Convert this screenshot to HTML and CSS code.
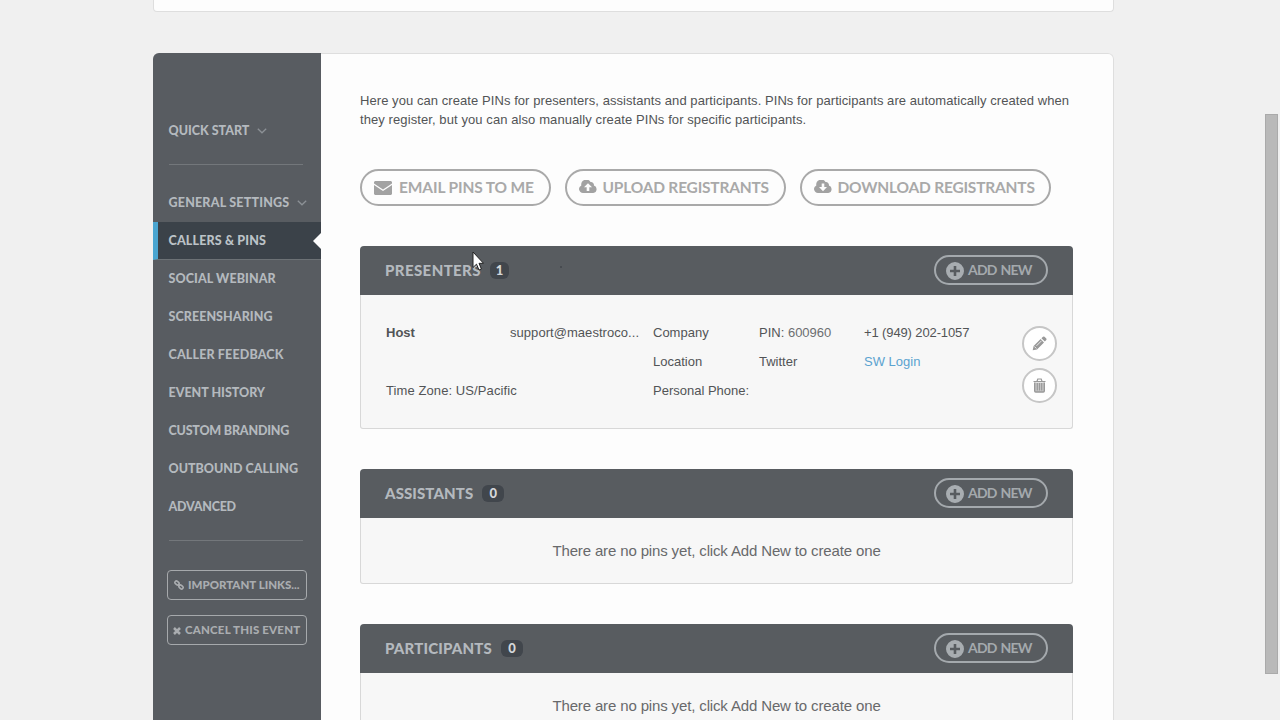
FILE: index.html
```html
<!DOCTYPE html>
<html lang="en">
<head>
<meta charset="utf-8">
<title>Callers &amp; PINs</title>
<link rel="stylesheet" href="styles.css">
</head>
<body>
<svg width="0" height="0" class="defs">
  <symbol id="plus" viewBox="0 0 18 18"><path fill-rule="evenodd" d="M9 0a9 9 0 1 1 0 18A9 9 0 0 1 9 0zM7.700 4v3.700H4v2.600h3.700V14h2.600v-3.700H14V7.700h-3.700V4z"/></symbol>
  <symbol id="chev" viewBox="0 0 10 6"><path d="M.8.8L5 4.800 9.200.8" fill="none" stroke="currentColor" stroke-width="1.300"/></symbol>
</svg>
<div class="page">
  <div class="card-prev"></div>
  <div class="card">
    <nav class="side">
      <a class="item quick"><span class="t1">QUICK START</span><svg class="chev"><use href="#chev"/></svg></a>
      <hr class="rule">
      <div class="menu">
        <a class="item"><span class="t2">GENERAL SETTINGS</span><svg class="chev"><use href="#chev"/></svg></a>
        <a class="item active"><span class="t3">CALLERS &amp; PINS</span></a>
        <a class="item"><span class="t4">SOCIAL WEBINAR</span></a>
        <a class="item"><span class="t5">SCREENSHARING</span></a>
        <a class="item"><span class="t6">CALLER FEEDBACK</span></a>
        <a class="item"><span class="t7">EVENT HISTORY</span></a>
        <a class="item"><span class="t8">CUSTOM BRANDING</span></a>
        <a class="item"><span class="t9">OUTBOUND CALLING</span></a>
        <a class="item"><span class="t10">ADVANCED</span></a>
      </div>
      <hr class="rule">
      <a class="sbtn"><svg class="s-link" viewBox="0 0 10 10"><g fill="none" stroke="currentColor" stroke-width="1.600"><rect x="-2.300" y="-1.500" width="4.600" height="3" rx="1.500" transform="translate(3 3) rotate(42)"/><rect x="-2.300" y="-1.500" width="4.600" height="3" rx="1.500" transform="translate(7 7) rotate(42)"/><path d="M4 4l2 2"/></g></svg><span class="b1">IMPORTANT LINKS...</span></a>
      <a class="sbtn"><svg class="s-x" viewBox="0 0 8 8"><path d="M1 1l6 6M7 1L1 7" stroke="currentColor" stroke-width="2.500"/></svg><span class="b2">CANCEL THIS EVENT</span></a>
    </nav>
    <main class="main">
      <p class="intro"><span class="l1">Here you can create PINs for presenters, assistants and participants. PINs for participants are automatically created when</span><br><span class="l2">they register, but you can also manually create PINs for specific participants.</span></p>
      <div class="actions">
        <a class="pill p1"><svg class="mail" viewBox="0 0 18 14"><path d="M1 0h16l1 1v1.500L9 8.500 0 2.500V1zM0 4l9 6 9-6v9l-1 1H1l-1-1z"/></svg><span class="a1">EMAIL PINS TO ME</span></a>
        <a class="pill p2"><svg class="cloud" viewBox="0 0 18 13"><path fill-rule="evenodd" d="M4 13a4 4 0 0 1-1.700-7.600A5 5 0 0 1 11.500 2a3 3 0 0 1 3.400 3.600A3.800 3.800 0 0 1 14.300 13zM9 3.200L5 7.300h2.700V11h2.600V7.300H13z"/></svg><span class="a2">UPLOAD REGISTRANTS</span></a>
        <a class="pill p3"><svg class="cloud" viewBox="0 0 18 13"><path fill-rule="evenodd" d="M4 13a4 4 0 0 1-1.700-7.600A5 5 0 0 1 11.500 2a3 3 0 0 1 3.400 3.600A3.800 3.800 0 0 1 14.300 13zM7.700 3.500V7H5l4 4.200L13 7h-2.700V3.500z"/></svg><span class="a3">DOWNLOAD REGISTRANTS</span></a>
      </div>
      <section class="panel">
        <header class="head"><h2 class="h1">PRESENTERS</h2><span class="badge">1</span><a class="add"><svg class="plus"><use href="#plus"/></svg><span>ADD NEW</span></a></header>
        <div class="body host">
          <div class="grid">
            <b class="name">Host</b><span class="mail-addr">support@maestroco...</span><span>Company</span><span class="pin">PIN: <i>600960</i></span><span class="tel">+1 (949) 202-1057</span>
            <span class="loc">Location</span><span>Twitter</span><a class="link">SW Login</a>
            <span class="tz">Time Zone: US/Pacific</span><span class="phone">Personal Phone:</span>
          </div>
          <div class="tools">
            <a class="round"><svg width="15" height="15" viewBox="0 0 15 15"><path d="M.7 14.300l.9-4.300L8.600 3 12 6.400l-7 7zM9.400 2.200L11 .7q.8-.6 1.500 0l1.800 1.800q.6.800 0 1.500l-1.500 1.600z"/><path d="M2.400 10.500l2 2M4.500 9.800l5-5" stroke="#fff" stroke-width=".8"/></svg></a>
            <a class="round"><svg width="13" height="15" viewBox="0 0 13 15"><path d="M1.700 4.500V13q0 1 1 1h7.600q1 0 1-1V4.500" fill="#c8c8c8" stroke="#999" stroke-width="1.400"/><path d="M.5 3.500h12M4 3.300L4.800 1h3.400L9 3.300M4.300 5v7.500M6.500 5v7.500M8.700 5v7.500" fill="none" stroke="#999" stroke-width="1.200"/></svg></a>
          </div>
        </div>
      </section>
      <section class="panel">
        <header class="head"><h2 class="h2">ASSISTANTS</h2><span class="badge wide">0</span><a class="add"><svg class="plus"><use href="#plus"/></svg><span>ADD NEW</span></a></header>
        <div class="body empty">There are no pins yet, click Add New to create one</div>
      </section>
      <section class="panel">
        <header class="head"><h2 class="h3">PARTICIPANTS</h2><span class="badge wide">0</span><a class="add"><svg class="plus"><use href="#plus"/></svg><span>ADD NEW</span></a></header>
        <div class="body empty">There are no pins yet, click Add New to create one</div>
      </section>
    </main>
  </div>
</div>
<div class="thumb"></div>
<svg class="speck" viewBox="0 0 2 2"><circle cx="1" cy="1" r=".8" fill="#34383c"/></svg>
<svg class="cursor" viewBox="0 0 12 20"><path d="M1 1v15.500l3.500-3.300L7 19l2.400-1L7 12.300h4.500z" fill="#fff" stroke="#222" stroke-width="1"/></svg>
</body>
</html>
```
FILE: styles.css
```css
* { box-sizing: border-box; }
body { margin: 0; height: 720px; overflow: hidden; background: #f0f0f0; font: 13px/19px "Liberation Sans", Arial, sans-serif; color: #525456; }
.defs { position: absolute; }
.page { width: 961px; margin-left: 153px; height: 720px; overflow: hidden; }
.card-prev { height: 12px; background: #fdfdfd; border: 1px solid #dedede; border-top: 0; border-radius: 0 0 4px 4px; }
.card { display: flex; height: 760px; margin-top: 41px; background: #fdfdfd; border-radius: 6px; box-shadow: inset 0 0 0 1px #dedede; }

.side { width: 168px; flex: none; background: #585c61; border-radius: 6px 0 0 0; padding-top: 59px; }
.item { display: flex; align-items: center; height: 38px; padding-left: 15.500px; font: 900 12.500px/38px Lato, sans-serif; color: #b4b9be; white-space: nowrap; position: relative; }
.t2 { letter-spacing: .2px; }
.t3, .t6 { letter-spacing: .15px; }
.t4 { letter-spacing: .1px; }
.t5 { letter-spacing: .06px; }
.t8 { letter-spacing: -.2px; }
.t10 { letter-spacing: -.25px; }
.chev { width: 10px; height: 6px; margin-left: 8px; color: #8c9196; }
.rule { margin: 14px 18px 0 16px; border: 0; border-top: 1px solid #73777b; }
.menu { padding-top: 19px; }
.active { background: #3b4249; border-left: 5px solid #4aa5d0; border-bottom: 1px solid #6c7175; padding-left: 10.500px; color: #bcc2c7; }
.active::after { content: ""; position: absolute; right: 0; top: 11px; border: 8.500px solid transparent; border-right-color: #fdfdfd; border-left: 0; }
.sbtn { display: flex; align-items: center; height: 30px; width: 140px; margin: 15px 0 0 14px; padding-left: 6px; border: 1px solid #a6a9ac; border-radius: 4px; font: 900 11.500px/28px Lato, sans-serif; color: #aaadb0; white-space: nowrap; }
.rule + .sbtn { margin-top: 29px; }
.s-link { width: 10px; height: 10px; margin-right: 4px; }
.s-x { width: 8px; height: 8px; margin: 1px 4px 0 -1px; }
.b2 { letter-spacing: .18px; }

.main { width: 713px; margin-left: 39px; padding-top: 38px; }
.intro { margin: 0; white-space: nowrap; }
.l1 { letter-spacing: .067px; }
.l2 { letter-spacing: .088px; }
.actions { display: flex; margin-top: 40px; gap: 14px; }
.pill { display: flex; align-items: center; height: 37px; border: 2px solid #a9a9a9; border-radius: 19px; color: #a9a9a9; fill: #a2a2a2; font: 700 15.500px/33px Lato, sans-serif; white-space: nowrap; padding-left: 12px; }
.p1 { width: 191px; }
.p2 { width: 221px; }
.p3 { width: 251px; }
.a1 { letter-spacing: -.13px; }
.a2, .a3 { letter-spacing: -.2px; }
.mail { width: 18px; height: 14px; margin-right: 7px; }
.cloud { width: 18px; height: 13px; margin: -3px 5.500px 0 0; }

.panel { margin-top: 40px; }
.head { display: flex; align-items: center; height: 49px; padding: 0 25px; background: #585c60; border-radius: 4px 4px 0 0; }
.head h2 { margin: 0; font: 900 15px/49px Lato, sans-serif; color: #b4b9be; white-space: nowrap; }
.head .h1 { letter-spacing: .4px; }
.head .h2 { letter-spacing: .1px; }
.head .h3 { letter-spacing: .18px; }
.badge { width: 19px; height: 17px; margin-left: 9px; border-radius: 6px; background: #41464c; color: #d4d7da; font: 900 13px/17px Lato, sans-serif; text-align: center; }
.add { display: flex; align-items: center; width: 114px; height: 30px; margin: -1px 0 0 auto; padding-left: 10px; border: 2px solid #a4a9ad; border-radius: 15px; color: #a4a9ad; font: 700 14px/26px Lato, sans-serif; letter-spacing: -.75px; word-spacing: 1px; white-space: nowrap; }
.wide { width: 22px; }
.plus { width: 18px; height: 18px; margin-right: 4px; fill: #a8adb1; margin-top: 1px; }
.body { background: #f7f7f7; border: 1px solid #d8d8d8; border-top: 0; border-radius: 0 0 3px 3px; }
.host { height: 134px; display: flex; padding: 23px 0 0 25px; }
.grid { display: grid; grid-template-columns: 124px 143px 106px 105px 158px; grid-auto-rows: 29px; line-height: 29px; white-space: nowrap; height: 87px; }
.mail-addr { letter-spacing: .05px; }
.tel { letter-spacing: -.12px; }
.pin i { font-style: normal; color: #6c6e70; }
.loc { grid-column: 3; }
.link { color: #5ba3d0; }
.tz { grid-column: 1 / 3; letter-spacing: .09px; }
.tools { display: flex; flex-direction: column; gap: 7px; padding-top: 8px; }
.round { display: flex; align-items: center; justify-content: center; width: 35px; height: 35px; border: 2px solid #c6c6c6; border-radius: 50%; background: #fff; fill: #999; }
.empty { height: 66px; font-size: 15px; line-height: 66px; letter-spacing: -.14px; text-align: center; color: #68696b; }

.thumb { position: absolute; left: 1265px; top: 114px; width: 13px; height: 560px; background: #b9b9b9; border: 1px solid #aaa; }
.speck { position: absolute; left: 560px; top: 266px; width: 2px; height: 2px; }
.cursor { position: absolute; left: 472px; top: 251px; width: 12px; height: 20px; }
```
